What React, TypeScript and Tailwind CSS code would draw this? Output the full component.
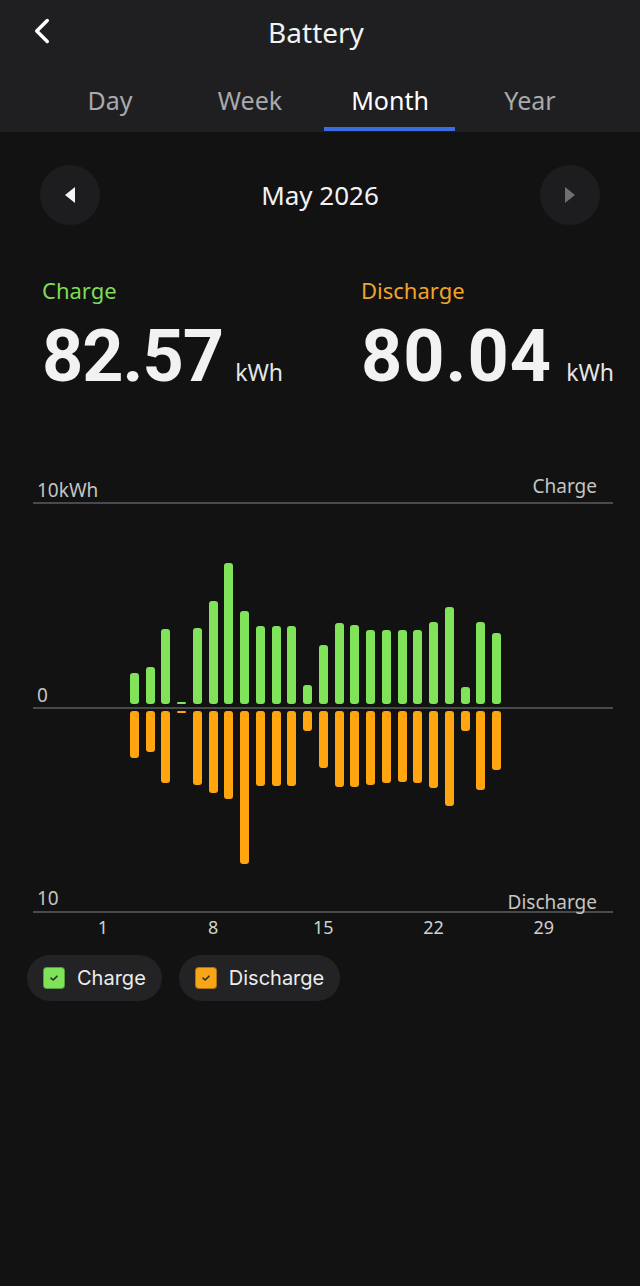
import React from "react";
import { ChevronLeft } from "lucide-react";

const PX_PER_KWH = 20.5;

// kWh per day of May (day 1..31)
const chargeData = [
  0, 0, 1.51, 1.8, 3.66, 0.1, 3.71, 5.02, 6.88, 4.54, 3.8, 3.8, 3.8, 0.93, 2.88,
  3.95, 3.85, 3.61, 3.61, 3.61, 3.61, 4.0, 4.73, 0.83, 4.0, 3.46, 0, 0, 0, 0, 0,
];
const dischargeData = [
  0, 0, 2.29, 2.0, 3.51, 0.1, 3.61, 4.0, 4.29, 7.46, 3.66, 3.66, 3.66, 0.98, 2.78,
  3.71, 3.71, 3.61, 3.51, 3.46, 3.51, 3.76, 4.63, 0.98, 3.85, 2.88, 0, 0, 0, 0, 0,
];

const xLabels: Record<number, string> = { 1: "1", 8: "8", 15: "15", 22: "22", 29: "29" };

function Tab({ label, active }: { label: string; active?: boolean }) {
  return (
    <div className="relative flex items-center justify-center pt-[5px]">
      <span className={active ? "text-[25px] text-white" : "text-[25px] text-[#a9a9ab]"}>{label}</span>
      {active && <div className="absolute bottom-[1px] left-[4px] right-[5px] h-[4px] bg-[#3a6ee0]" />}
    </div>
  );
}

function Check({ color }: { color: string }) {
  return (
    <span
      className="flex h-[22px] w-[22px] items-center justify-center rounded-[4px] border border-black/30"
      style={{ backgroundColor: color }}
    >
      <svg width="10" height="8" viewBox="0 0 10 8" fill="none">
        <path d="M2 4.2 L4.2 6 L8 2.2" stroke="#2a2a2a" strokeWidth="1.6" strokeLinecap="round" strokeLinejoin="round" />
      </svg>
    </span>
  );
}

export default function App() {
  return (
    <div className="min-h-[1286px] w-[640px] bg-[#121212] font-['Noto_Sans',sans-serif] text-white">
      <header className="bg-[#1f1f21]">
        <div className="relative flex h-[64px] items-center justify-center">
          <button className="absolute left-[21px] top-[10px] text-white">
            <ChevronLeft size={42} strokeWidth={2} />
          </button>
          <h1 className="pr-[8px] text-[28px] text-[#f2f2f2]">Battery</h1>
        </div>
        <div className="grid h-[68px] grid-cols-4 px-10">
          <Tab label="Day" />
          <Tab label="Week" />
          <Tab label="Month" active />
          <Tab label="Year" />
        </div>
      </header>

      <div className="mt-[33px] flex items-center justify-between px-10">
        <button className="flex h-[60px] w-[60px] items-center justify-center rounded-full bg-[#1d1d1f]">
          <svg width="12" height="18" viewBox="0 0 12 18">
            <polygon points="11,1 11,17 1,9" fill="#f5f5f5" />
          </svg>
        </button>
        <span className="text-[26px] text-[#f2f2f2]">May 2026</span>
        <button className="flex h-[60px] w-[60px] items-center justify-center rounded-full bg-[#1d1d1f]">
          <svg width="12" height="18" viewBox="0 0 12 18">
            <polygon points="1,1 1,17 11,9" fill="#6f6f71" />
          </svg>
        </button>
      </div>

      <div className="mt-[51px] flex pl-[42px]">
        <div className="w-[319px]">
          <div className="text-[22px] leading-[29px] text-[#7ddc55]">Charge</div>
          <div className="mt-[16px] flex items-baseline">
            <span className="font-['Roboto',sans-serif] text-[72px] font-bold leading-none tracking-[-1px] text-[#f2f2f2]">82.57</span>
            <span className="ml-[12px] text-[23px] text-[#e6e6e6]">kWh</span>
          </div>
        </div>
        <div>
          <div className="text-[22px] leading-[29px] text-[#f0a428]">Discharge</div>
          <div className="mt-[16px] flex items-baseline">
            <span className="font-['Roboto',sans-serif] text-[72px] font-bold leading-none tracking-[1px] text-[#f2f2f2]">80.04</span>
            <span className="ml-[14px] text-[23px] text-[#e6e6e6]">kWh</span>
          </div>
        </div>
      </div>

      {/* Chart */}
      <div className="mx-[33px] mt-[85px] w-[580px]">
        <div className="flex items-end justify-between pl-[4px] pr-[16px] text-[19px] leading-[24px] text-[#c4c4c4]">
          <span>10kWh</span>
          <span className="relative top-[-4px]">Charge</span>
        </div>
        <div className="h-[2px] bg-[#4a4a4c]" />

        <div className="relative h-[203px]">
          <span className="absolute bottom-[1px] left-[4px] text-[19px] leading-[22px] text-[#c4c4c4]">0</span>
          <div className="ml-[62px] grid h-full grid-cols-[repeat(31,15.75px)] items-end">
            {chargeData.map((v, i) => (
              <div key={i} className="flex justify-center pb-[3px]">
                {v > 0 && (
                  <div
                    className="w-[9px] rounded-[3px] bg-[#80e35a]"
                    style={{ height: Math.max(2, Math.round(v * PX_PER_KWH)) }}
                  />
                )}
              </div>
            ))}
          </div>
        </div>
        <div className="h-[2px] bg-[#4a4a4c]" />
        <div className="relative h-[202px]">
          <div className="ml-[62px] grid h-full grid-cols-[repeat(31,15.75px)] items-start">
            {dischargeData.map((v, i) => (
              <div key={i} className="flex justify-center pt-[2px]">
                {v > 0 && (
                  <div
                    className="w-[9px] rounded-[3px] bg-[#ffa510]"
                    style={{ height: Math.max(2, Math.round(v * PX_PER_KWH)) }}
                  />
                )}
              </div>
            ))}
          </div>
          <span className="absolute bottom-[2px] left-[4px] text-[19px] leading-[22px] text-[#c4c4c4]">10</span>
          <span className="absolute bottom-[-2px] right-[16px] text-[19px] leading-[22px] text-[#c4c4c4]">Discharge</span>
        </div>
        <div className="h-[2px] bg-[#4a4a4c]" />
        <div className="ml-[62px] mt-[2px] grid grid-cols-[repeat(31,15.75px)] text-[18px] leading-[24px] text-[#d0d0d0]">
          {Array.from({ length: 31 }, (_, i) => (
            <div key={i} className="flex justify-center whitespace-nowrap">
              {xLabels[i + 1] ?? ""}
            </div>
          ))}
        </div>
      </div>

      <div className="mt-[16px] flex gap-[17px] px-[27px] font-['Inter',sans-serif]">
        <div className="flex h-[46px] items-center gap-[12px] rounded-full bg-[#232325] pl-[16px] pr-[16px]">
          <Check color="#7fe35a" />
          <span className="text-[20px] text-[#ececec]">Charge</span>
        </div>
        <div className="flex h-[46px] items-center gap-[12px] rounded-full bg-[#232325] pl-[16px] pr-[16px]">
          <Check color="#f8a617" />
          <span className="text-[20px] text-[#ececec]">Discharge</span>
        </div>
      </div>
    </div>
  );
}
